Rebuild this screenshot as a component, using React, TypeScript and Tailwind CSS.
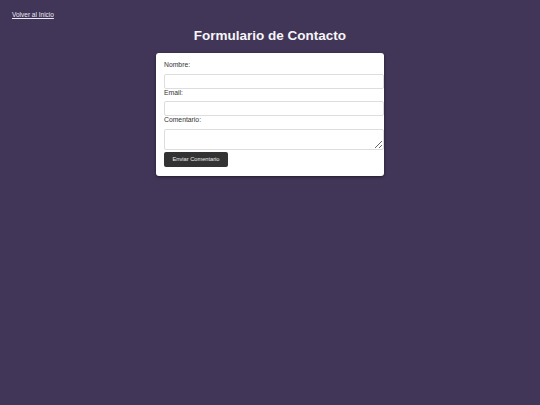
export default function App() {
  return (
    <div className="min-h-screen w-full bg-[#413657] font-['Liberation_Sans',Arial,sans-serif] flex flex-col">
      <div className="pl-[12px] pt-[11px] h-[21px]">
        <a href="#" className="block w-fit text-[6.5px] leading-[8px] text-[#ece8f5] underline">Volver al Inicio</a>
      </div>
      <h1 className="mt-[7px] mb-[9px] text-center text-[13.5px] leading-[16px] font-bold text-[#f7f5fa]">Formulario de Contacto</h1>
      <div className="mx-auto w-[228px] bg-white rounded-[3px] shadow-[0_1px_3px_rgba(0,0,0,0.5)] pl-[8px] pt-[8px] pb-[9.3px]">
        <label className="block text-[6.8px] leading-[8px] text-[#333] mb-[4.5px]">Nombre:</label>
        <input className="block w-[220px] h-[15px] border border-[#ddd] rounded-[2px] bg-white outline-none" />
        <label className="block text-[6.8px] leading-[8px] text-[#333] mb-[4.5px]">Email:</label>
        <input className="block w-[220px] h-[15px] border border-[#ddd] rounded-[2px] bg-white outline-none" />
        <label className="block text-[6.8px] leading-[8px] text-[#333] mb-[4.5px]">Comentario:</label>
        <textarea className="block w-[220px] h-[21.5px] border border-[#ddd] rounded-[2px] bg-white outline-none text-[6px] resize" />
        <button className="mt-[1.5px] w-[64px] h-[15px] bg-[#333] text-[#eee] text-[5.7px] rounded-[2px] flex items-center justify-center">Enviar Comentario</button>
      </div>
    </div>
  );
}
